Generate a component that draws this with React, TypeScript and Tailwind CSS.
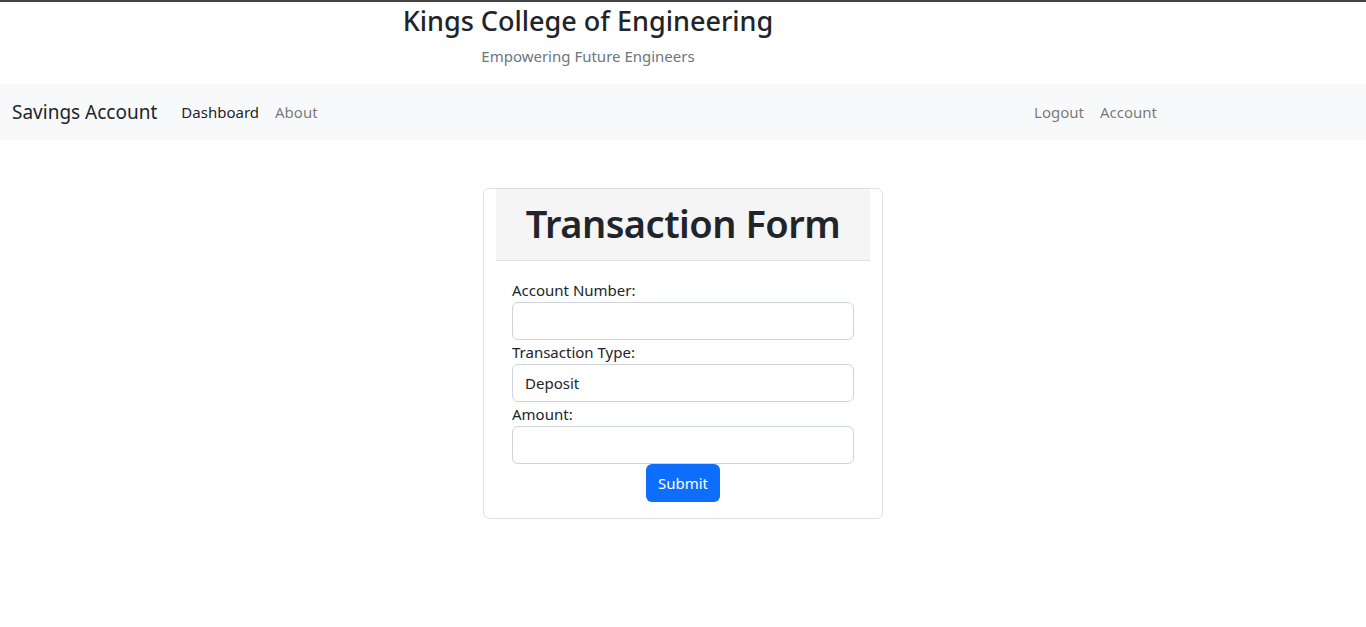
import React, { useState } from "react";

export default function App() {
  const [type, setType] = useState("Deposit");

  return (
    <div className="min-h-screen bg-white text-[#212529] font-['Noto_Sans',_'Open_Sans',_sans-serif]">
      <div className="border-t-2 border-[#444]">
        <div className="w-[1176px] text-center pt-[2px] pb-4">
          <h3 className="text-[27px] leading-[34px] font-medium mb-[6px]">Kings College of Engineering</h3>
          <p className="text-[15px] leading-6 text-[#6c757d]">Empowering Future Engineers</p>
        </div>
      </div>

      <nav className="bg-[#f8f9fa] h-14">
        <div className="w-[1178px] h-full pl-3 pr-[13px] flex items-center">
          <a className="text-[19px] text-[#212529] mr-4 cursor-pointer">Savings Account</a>
          <div className="flex items-center">
            <a className="px-2 text-[15px] text-black/90 cursor-pointer">Dashboard</a>
            <a className="px-2 text-[15px] text-black/55 cursor-pointer">About</a>
          </div>
          <div className="ml-auto flex items-center">
            <a className="px-2 text-[15px] text-black/55 cursor-pointer">Logout</a>
            <a className="px-2 text-[15px] text-black/55 cursor-pointer">Account</a>
          </div>
        </div>
      </nav>

      <div className="flex justify-center mt-12">
        <div className="w-[400px] border border-[#dee2e6] rounded-md px-3 pb-4">
          <div className="bg-[#f5f5f5] border-b border-[#dedede] h-[72px] flex items-center justify-center">
            <h1 className="text-[38px] font-semibold leading-none tracking-[-0.5px] -mt-[3px]">Transaction Form</h1>
          </div>
          <form
            className="px-4 pt-[17px] flex flex-col text-[15px]"
            onSubmit={(e) => e.preventDefault()}
          >
            <label className="leading-6">Account Number:</label>
            <input className="h-[38px] border border-[#ced4da] rounded-md px-3 outline-none" />
            <label className="leading-6">Transaction Type:</label>
            <select
              value={type}
              onChange={(e) => setType(e.target.value)}
              className="h-[38px] border border-[#ced4da] rounded-md px-3 appearance-none bg-white outline-none"
            >
              <option>Deposit</option>
              <option>Withdraw</option>
            </select>
            <label className="leading-6">Amount:</label>
            <input className="h-[38px] border border-[#ced4da] rounded-md px-3 outline-none" />
            <div className="flex justify-center">
              <button className="h-[38px] px-3 rounded-md bg-[#0d6efd] text-white">Submit</button>
            </div>
          </form>
        </div>
      </div>
    </div>
  );
}
